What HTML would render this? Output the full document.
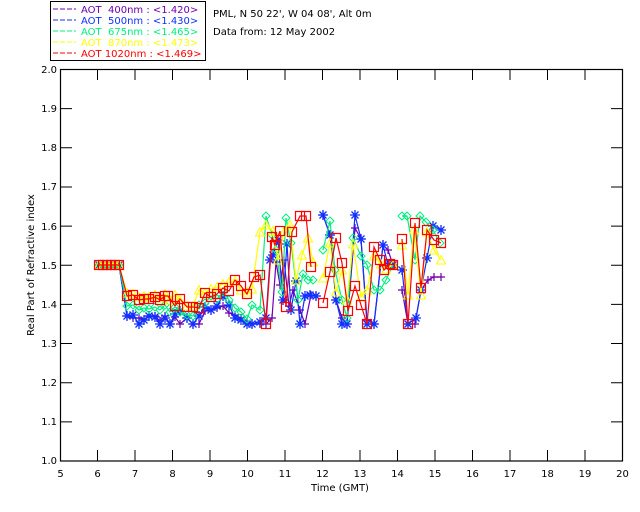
<!DOCTYPE html>
<html><head><meta charset="utf-8"><style>
html,body{margin:0;padding:0;background:#fff;}
svg{display:block;font-family:"DejaVu Sans","Liberation Sans",sans-serif;}
</style></head><body>
<svg width="640" height="512" viewBox="0 0 640 512" xmlns="http://www.w3.org/2000/svg">
<defs>
<marker id="mp" markerWidth="10" markerHeight="10" refX="5" refY="5" markerUnits="userSpaceOnUse"><path d="M5 1V9M1 5H9" stroke="#7000b0" stroke-width="1.2" fill="none"/></marker>
<marker id="mb" markerWidth="12" markerHeight="12" refX="6" refY="6" markerUnits="userSpaceOnUse"><path d="M6 1V11M1 6H11M2.5 2.5L9.5 9.5M9.5 2.5L2.5 9.5" stroke="#1030ff" stroke-width="1.3" fill="none"/></marker>
<marker id="mg" markerWidth="10" markerHeight="10" refX="5" refY="5" markerUnits="userSpaceOnUse"><path d="M5 1L9 5L5 9L1 5Z" stroke="#00f080" stroke-width="1" fill="none"/></marker>
<marker id="my" markerWidth="10" markerHeight="10" refX="5" refY="5" markerUnits="userSpaceOnUse"><path d="M5 0.5L9.5 9H0.5Z" stroke="#ffff00" stroke-width="1" fill="none"/></marker>
<marker id="mr" markerWidth="12" markerHeight="12" refX="6" refY="6" markerUnits="userSpaceOnUse"><rect x="1.5" y="1.5" width="9" height="9" stroke="#ff0000" stroke-width="1.2" fill="none"/></marker>
</defs>

<rect x="50.5" y="1.5" width="155" height="59" fill="none" stroke="#000"/>
<g font-size="10">
<line x1="53" y1="9" x2="76" y2="9" stroke="#7000b0" stroke-dasharray="5,2"/><text x="81" y="13" fill="#7000b0" xml:space="preserve">AOT  400nm : &lt;1.420&gt;</text>
<line x1="53" y1="20" x2="76" y2="20" stroke="#1030ff" stroke-dasharray="5,2"/><text x="81" y="24" fill="#1030ff" xml:space="preserve">AOT  500nm : &lt;1.430&gt;</text>
<line x1="53" y1="31" x2="76" y2="31" stroke="#00f080" stroke-dasharray="5,2"/><text x="81" y="35" fill="#00f080" xml:space="preserve">AOT  675nm : &lt;1.465&gt;</text>
<line x1="53" y1="42" x2="76" y2="42" stroke="#ffff00" stroke-dasharray="5,2"/><text x="81" y="46" fill="#ffff00" xml:space="preserve">AOT  870nm : &lt;1.473&gt;</text>
<line x1="53" y1="53" x2="76" y2="53" stroke="#ff0000" stroke-dasharray="5,2"/><text x="81" y="57" fill="#ff0000" xml:space="preserve">AOT 1020nm : &lt;1.469&gt;</text>
</g>
<text x="213" y="17" font-size="10">PML, N 50 22', W 04 08', Alt 0m</text>
<text x="213" y="35" font-size="10">Data from: 12 May 2002</text>

<rect x="60.5" y="69.5" width="562" height="391.5" fill="none" stroke="#000" stroke-width="1.2"/>
<g stroke="#000" stroke-width="1">
<path d="M97.5 461V450M135 461V450M172.5 461V450M210 461V450M247.5 461V450M285 461V450M322.5 461V450M360 461V450M397.5 461V450M435 461V450M472.5 461V450M510 461V450M547.5 461V450M585 461V450"/>
<path d="M97.5 69.5V80M135 69.5V80M172.5 69.5V80M210 69.5V80M247.5 69.5V80M285 69.5V80M322.5 69.5V80M360 69.5V80M397.5 69.5V80M435 69.5V80M472.5 69.5V80M510 69.5V80M547.5 69.5V80M585 69.5V80"/>
<path d="M60.5 421.85H72M60.5 382.7H72M60.5 343.55H72M60.5 304.4H72M60.5 265.25H72M60.5 226.1H72M60.5 186.95H72M60.5 147.8H72M60.5 108.65H72"/>
<path d="M622.5 421.85H611M622.5 382.7H611M622.5 343.55H611M622.5 304.4H611M622.5 265.25H611M622.5 226.1H611M622.5 186.95H611M622.5 147.8H611M622.5 108.65H611"/>
</g>
<g font-size="10" text-anchor="end">
<text x="57" y="464">1.0</text><text x="57" y="425">1.1</text><text x="57" y="386">1.2</text><text x="57" y="347">1.3</text><text x="57" y="308">1.4</text><text x="57" y="269">1.5</text><text x="57" y="230">1.6</text><text x="57" y="190">1.7</text><text x="57" y="151">1.8</text><text x="57" y="112">1.9</text><text x="57" y="73">2.0</text>
</g>
<g font-size="10" text-anchor="middle">
<text x="60.5" y="477">5</text><text x="97.5" y="477">6</text><text x="135" y="477">7</text><text x="172.5" y="477">8</text><text x="210" y="477">9</text><text x="247.5" y="477">10</text><text x="285" y="477">11</text><text x="322.5" y="477">12</text><text x="360" y="477">13</text><text x="397.5" y="477">14</text><text x="435" y="477">15</text><text x="472.5" y="477">16</text><text x="510" y="477">17</text><text x="547.5" y="477">18</text><text x="585" y="477">19</text><text x="622.5" y="477">20</text>
<text x="340" y="491">Time (GMT)</text>
</g>
<text transform="translate(34 265) rotate(-90)" font-size="10" text-anchor="middle">Real Part of Refractive index</text>

<g fill="none" stroke-width="1.2">
<g stroke="#7000b0" marker-start="url(#mp)" marker-mid="url(#mp)" marker-end="url(#mp)">
<polyline marker-start="url(#mp)" marker-mid="url(#mp)" marker-end="url(#mp)" points="99,265 103,265 107,265 111,265 115,265 119,265 127,316 133,318 139,318 144,320 149,316 155,316 160,321 165,316 170,324 175,317 180,324 187,318 193,324 199,324 205,311 211,310 217,308 223,306 229,313 235,315 241,318 247,322 252,324 260,324 266,324 272,318 276,262 280,285 284,260 289,306 293,290 300,310 305,324 311,295 316,296"/>
<polyline marker-start="url(#mp)" marker-mid="url(#mp)" marker-end="url(#mp)" points="323,215 330,235 336,300 342,318 347,324 355,228 361,239 367,320 374,324 383,245 388,250 393,265"/>
<polyline marker-start="url(#mp)" marker-mid="url(#mp)" marker-end="url(#mp)" points="402,290 408,324 415,324 421,290 428,280 434,277 441,277"/>
</g>
<g stroke="#1030ff">
<polyline marker-start="url(#mb)" marker-mid="url(#mb)" marker-end="url(#mb)" points="99,265 103,265 107,265 111,265 115,265 119,265 127,316 133,315 139,324 144,320 149,316 155,317 160,324 165,318 170,324 175,314 180,311 187,318 193,324 199,316 205,307 211,310 217,306 223,296 229,305 235,318 241,320 247,324 252,324 260,322 266,318 270,260 273,255 278,240 283,300 287,244 291,310 296,281 300,324 305,296 310,295 316,296"/>
<polyline marker-start="url(#mb)" marker-mid="url(#mb)" marker-end="url(#mb)" points="323,215 330,235 336,300 342,324 347,324 355,215 361,239 367,324 374,324 383,245 388,265 393,265"/>
<polyline marker-start="url(#mb)" marker-mid="url(#mb)" marker-end="url(#mb)" points="402,270 408,324 416,318 421,290 427,258 433,226 441,230"/>
</g>
<g stroke="#00f080">
<polyline marker-start="url(#mg)" marker-mid="url(#mg)" marker-end="url(#mg)" points="99,265 103,265 107,265 111,265 115,265 119,265 127,306 133,305 139,310 144,308 149,309 155,307 160,310 165,305 170,312 175,307 180,312 187,315 193,316 199,305 205,303 211,296 217,299 223,292 229,300 235,308 241,312 247,319 252,305 260,310 266,216 272,235 276,250 282,292 286,218 291,243 298,300 303,274 308,280 313,280"/>
<polyline marker-start="url(#mg)" marker-mid="url(#mg)" marker-end="url(#mg)" points="323,250 330,221 335,270 342,300 347,318 353,238 361,256 367,265 374,290 380,290 386,280 393,265"/>
<polyline marker-start="url(#mg)" marker-mid="url(#mg)" marker-end="url(#mg)" points="402,216 407,216 415,260 420,216 426,222 433,230 440,243"/>
</g>
<g stroke="#ffff00">
<polyline marker-start="url(#my)" marker-mid="url(#my)" marker-end="url(#my)" points="99,265 103,265 107,265 111,265 115,265 119,265 127,293 133,294 139,297 144,296 149,297 155,295 160,298 165,294 170,300 175,295 180,300 187,306 193,306 199,290 205,293 211,289 217,287 223,284 229,282 235,281 241,290 247,292 252,289 260,232 266,225 273,231 278,260 284,232 290,225 296,280 302,255 308,238 313,262"/>
<polyline marker-start="url(#my)" marker-mid="url(#my)" marker-end="url(#my)" points="323,278 330,243 336,292 342,270 347,300 353,244 361,297 367,290 374,256 381,264 386,269 393,265"/>
<polyline marker-start="url(#my)" marker-mid="url(#my)" marker-end="url(#my)" points="402,245 408,295 414,230 421,295 427,232 434,250 441,260"/>
</g>
<g stroke="#ff0000">
<polyline marker-start="url(#mr)" marker-mid="url(#mr)" marker-end="url(#mr)" points="99,265 103,265 107,265 111,265 115,265 119,265 127,296 133,295 139,300 144,299 149,299 155,297 160,300 165,296 168,296 175,306 180,299 187,307 193,307 199,308 205,293 211,297 217,294 223,288 229,291 235,280 241,286 247,294 254,277 260,275 266,324 272,237 275,245 280,231 286,307 292,232 300,216 306,216 311,267"/>
<polyline marker-start="url(#mr)" marker-mid="url(#mr)" marker-end="url(#mr)" points="323,303 330,272 336,238 342,263 348,311 355,286 361,305 367,324 374,247 380,260 384,270 390,264 393,265"/>
<polyline marker-start="url(#mr)" marker-mid="url(#mr)" marker-end="url(#mr)" points="402,239 408,324 415,223 421,288 427,230 434,240 441,243"/>
</g>
</g>
</svg>
</body></html>
